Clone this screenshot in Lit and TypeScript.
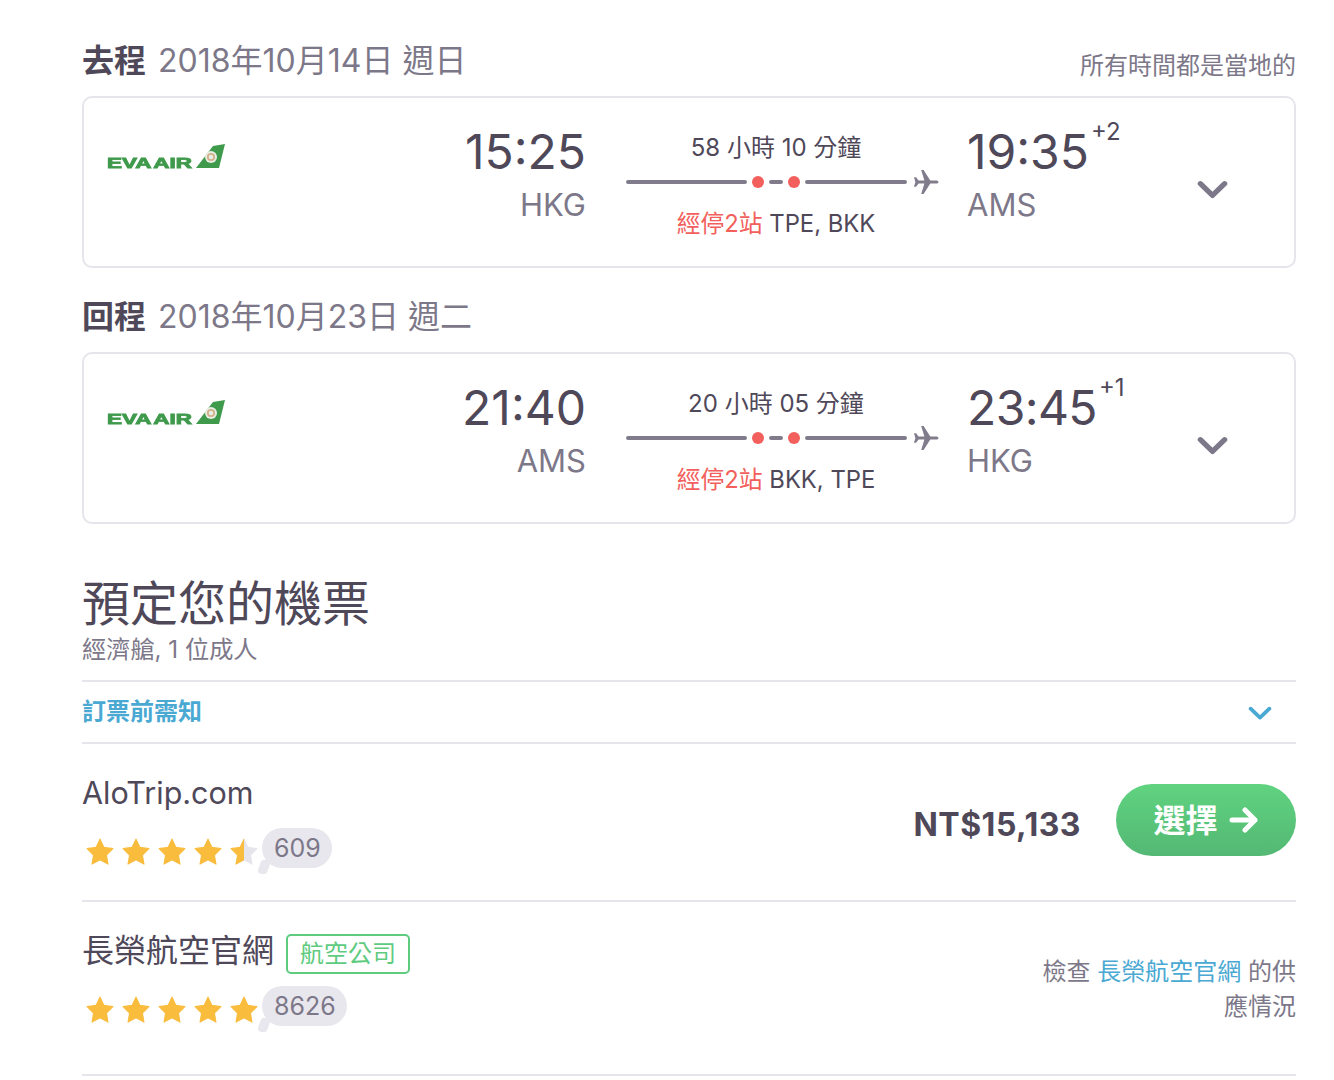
import { LitElement, html, css, svg } from "lit";
import { customElement } from "lit/decorators.js";

const starPath = "M14 2.500l3.500 7.400 8 1.100-5.800 5.700 1.400 8.100L14 20.900l-7.100 3.900 1.400-8.100L2.500 11l8-1.100z";

const star = (fill: string) => html`<svg class="star" viewBox="1.500 1.500 25 25"><path d=${starPath} fill=${fill} stroke=${fill} stroke-width="1" stroke-linejoin="round"></path></svg>`;

const logo = () => html`<svg class="logo" viewBox="0 0 118 28">
  ${svg`<text class="logo-text" x="0" y="25" textLength="85" lengthAdjust="spacingAndGlyphs">EVA AIR</text>
  <path d="M89 25 L106 3 L118 1 L112 25 Z" fill="#3f9a4c"></path>
  <circle cx="104" cy="14" r="6" fill="#e6efe2"></circle>
  <circle cx="104" cy="14" r="3.200" fill="none" stroke="#d3b08e" stroke-width="1.800"></circle>`}
</svg>`;

const chevron = (color: string, cls: string, w = 5.500) => html`<svg class=${cls} viewBox="0 0 32 20"><path d="M3.500 3.500L16 15.500 28.500 3.500" fill="none" stroke=${color} stroke-width=${w} stroke-linecap="round" stroke-linejoin="round"></path></svg>`;

const plane = () => html`<svg class="plane" viewBox="0 0 26 26"><path fill="#817c8c" d="M25.500 13c0-.9-1.200-1.600-2.600-1.600h-5.600L10.600 1H8.200l3.200 10.400H5.600L3 8.200H1l1.400 4.800L1 17.800h2l2.600-3.200h5.800L8.200 25h2.400l6.700-10.400h5.600c1.400 0 2.600-.7 2.600-1.600z"></path></svg>`;

interface Leg {
  label: string; date: string; dep: string; from: string; dur: string; via: string;
  arr: string; plus: string; to: string; arrSpacing: number;
}

const legs: Leg[] = [
  { label: "去程", date: "2018年10月14日 週日", dep: "15:25", from: "HKG", dur: "58 小時 10 分鐘", via: "TPE, BKK", arr: "19:35", plus: "+2", to: "AMS", arrSpacing: 0 },
  { label: "回程", date: "2018年10月23日 週二", dep: "21:40", from: "AMS", dur: "20 小時 05 分鐘", via: "BKK, TPE", arr: "23:45", plus: "+1", to: "HKG", arrSpacing: -0.6 },
];

@customElement("app-root")
export class AppRoot extends LitElement {
  static styles = css`
    :host {
      display: block;
      width: 1334px;
      height: 1080px;
      overflow: hidden;
      background: #fff;
      color: #4f4859;
      font-family: Inter, "Noto Sans CJK TC", sans-serif;
      -webkit-font-smoothing: antialiased;
    }
    .page { padding: 38px 38px 0 82px; display: flex; flex-direction: column; }
    .head { display: flex; justify-content: space-between; align-items: flex-start; height: 46px; }
    .head-left { font-size: 32px; line-height: 46px; display: flex; gap: 12px; }
    .head-left b { font-weight: 700; }
    .head-left span { color: #7d7889; }
    .note { font-size: 24px; line-height: 46px; margin-top: 5px; color: #7d7889; }
    .card {
      box-sizing: border-box;
      height: 172px;
      margin-top: 12px;
      border: 2px solid #e6e5ec;
      border-radius: 10px;
      display: grid;
      grid-template-columns: 502px 354px 257px 30px;
    }
    .col-logo { position: relative; padding: 45px 0 0 23px; display: flex; align-items: flex-start; }
    .logo { width: 118px; height: 28px; display: block; filter: blur(.4px); }
    .logo-text { font: 900 15.500px "Liberation Sans", sans-serif; word-spacing: -2px; fill: #3f9a4c; stroke: #3f9a4c; stroke-width: .9; }
    .dep { position: absolute; right: 0; top: 25px; text-align: right; }
    .time { font-size: 48px; line-height: 58px; font-weight: 400; }
    .code { font-size: 31px; line-height: 40px; color: #7d7889; margin-top: 4px; }
    .mid { margin-left: 40px; display: flex; flex-direction: column; }
    .dur { width: 300px; text-align: center; font-size: 24px; line-height: 30px; margin-top: 35px; }
    .line { display: flex; align-items: center; height: 26px; margin-top: 6px; }
    .seg { height: 4px; background: #817c8c; border-radius: 2px; flex: none; }
    .dot { width: 12px; height: 12px; border-radius: 50%; background: #f25f5c; margin: 0 5px; flex: none; }
    .plane { width: 26px; height: 26px; margin-left: 6px; flex: none; }
    .via { width: 300px; text-align: center; font-size: 23.800px; line-height: 30px; margin-top: 14px; }
    .via em { color: #f25f5c; font-style: normal; }
    .arr { margin-left: 27px; padding-top: 25px; }
    .arr-time { display: flex; align-items: flex-start; }
    .arr sup { font-size: 24px; line-height: 24px; margin: -3px 0 0 2px; }
    .chev-wrap { display: flex; padding-top: 82px; }
    .chev { width: 31px; height: 20px; flex: none; }
    .second { margin-top: 26px; }
    h1 { font-size: 48px; line-height: 60px; font-weight: 400; margin: 50px 0 0; }
    .sub { font-size: 24.200px; line-height: 30px; color: #7d7889; margin-top: 1px; }
    .notice {
      margin-top: 15px; height: 64px; box-sizing: border-box; padding-bottom: 6px;
      border-top: 2px solid #e6e5ec; border-bottom: 2px solid #e6e5ec;
      display: flex; align-items: center; justify-content: space-between;
      font-size: 24px; font-weight: 700; color: #4aa9d3;
    }
    .chev-blue { width: 24px; height: 15px; margin: 8px 24px 0 0; }
    .row {
      box-sizing: border-box; display: flex; justify-content: space-between;
      border-bottom: 2px solid #e6e5ec;
    }
    .r1 { height: 158px; }
    .r2 { height: 174px; }
    .name { font-size: 32px; line-height: 44px; height: 44px; display: flex; gap: 12px; margin-top: 27px; }
    .r1 .name { font-size: 30.500px; }
    .tag {
      box-sizing: border-box; font-size: 24px; line-height: 36px; height: 40px; width: 124px; text-align: center;
      border: 2px solid #5fcb7f; border-radius: 5px; color: #5fcb7f; margin-top: 5px;
    }
    .rating { display: flex; align-items: flex-start; margin-top: 13px; }
    .stars { display: flex; gap: 8px; margin: 10px 0 0 4px; }
    .star { width: 28px; height: 28px; display: block; }
    .bubble {
      position: relative; margin-left: 4px; height: 40px; padding: 0 11px 0 12px;
      background: #e8e7ed; border-radius: 20px; font-size: 25px; line-height: 40px; color: #7d7889;
    }
    .bubble::after {
      content: ""; position: absolute; left: -3px; bottom: -6px; width: 10px; height: 14px;
      background: #e8e7ed; border-radius: 2px 2px 2px 5px; transform: skewX(-20deg);
    }
    .buy { display: flex; align-items: center; gap: 35px; margin-top: 40px; align-self: flex-start; }
    .price { font-size: 32px; font-weight: 700; letter-spacing: .5px; margin-top: 8px; }
    .btn {
      width: 180px; height: 72px; border-radius: 36px; border: 0; color: #fff; padding: 0 0 4px;
      background: linear-gradient(#60d380, #53b874);
      display: flex; align-items: center; justify-content: center; gap: 11px;
      font: 700 32px Inter, "Noto Sans CJK TC", sans-serif;
    }
    .btn svg { width: 30px; height: 26px; margin-top: 4px; }
    .check { width: 260px; text-align: right; font-size: 24px; line-height: 35px; color: #7d7889; margin-top: 52px; }
    .check div { white-space: nowrap; }
    .check a { color: #4aa9d3; }
  `;

  leg(l: Leg, second: boolean) {
    return html`
      <div class="head ${second ? "second" : ""}">
        <div class="head-left"><b>${l.label}</b><span>${l.date}</span></div>
        ${second ? "" : html`<div class="note">所有時間都是當地的</div>`}
      </div>
      <div class="card">
        <div class="col-logo">
          ${logo()}
          <div class="dep"><div class="time">${l.dep}</div><div class="code">${l.from}</div></div>
        </div>
        <div class="mid">
          <div class="dur">${l.dur}</div>
          <div class="line">
            <div class="seg" style="width:121px"></div><div class="dot"></div>
            <div class="seg" style="width:14px"></div><div class="dot"></div>
            <div class="seg" style="width:102px"></div>
            ${plane()}
          </div>
          <div class="via"><em>經停2站</em> ${l.via}</div>
        </div>
        <div class="arr">
          <div class="arr-time"><div class="time" style="letter-spacing:${l.arrSpacing}px">${l.arr}</div><sup>${l.plus}</sup></div>
          <div class="code">${l.to}</div>
        </div>
        <div class="chev-wrap">${chevron("#7d7889", "chev")}</div>
      </div>`;
  }

  rating(half: boolean, count: string) {
    const g = "#f9bc3d";
    return html`<div class="rating">
      <div class="stars">
        ${star(g)}${star(g)}${star(g)}${star(g)}
        ${half
          ? html`<svg class="star" viewBox="1.500 1.500 25 25">
              <defs><linearGradient id="half"><stop offset="50%" stop-color=${g}></stop><stop offset="50%" stop-color="#e6e5ec"></stop></linearGradient></defs>
              <path d=${starPath} fill="url(#half)" stroke="url(#half)" stroke-width="1" stroke-linejoin="round"></path></svg>`
          : star(g)}
      </div>
      <div class="bubble">${count}</div>
    </div>`;
  }

  render() {
    return html`<div class="page">
      ${this.leg(legs[0], false)}
      ${this.leg(legs[1], true)}
      <h1>預定您的機票</h1>
      <div class="sub">經濟艙, 1 位成人</div>
      <div class="notice"><span>訂票前需知</span>${chevron("#4aa9d3", "chev-blue", 5)}</div>
      <div class="row r1">
        <div><div class="name">AloTrip.com</div>${this.rating(true, "609")}</div>
        <div class="buy">
          <div class="price">NT$15,133</div>
          <button class="btn">選擇
            <svg viewBox="0 0 30 26"><path d="M3 13h23M16 3l10 10-10 10" fill="none" stroke="#fff" stroke-width="5" stroke-linecap="round" stroke-linejoin="round"></path></svg>
          </button>
        </div>
      </div>
      <div class="row r2">
        <div><div class="name">長榮航空官網<span class="tag">航空公司</span></div>${this.rating(false, "8626")}</div>
        <div class="check"><div>檢查 <a>長榮航空官網</a> 的供</div><div>應情況</div></div>
      </div>
    </div>`;
  }
}
